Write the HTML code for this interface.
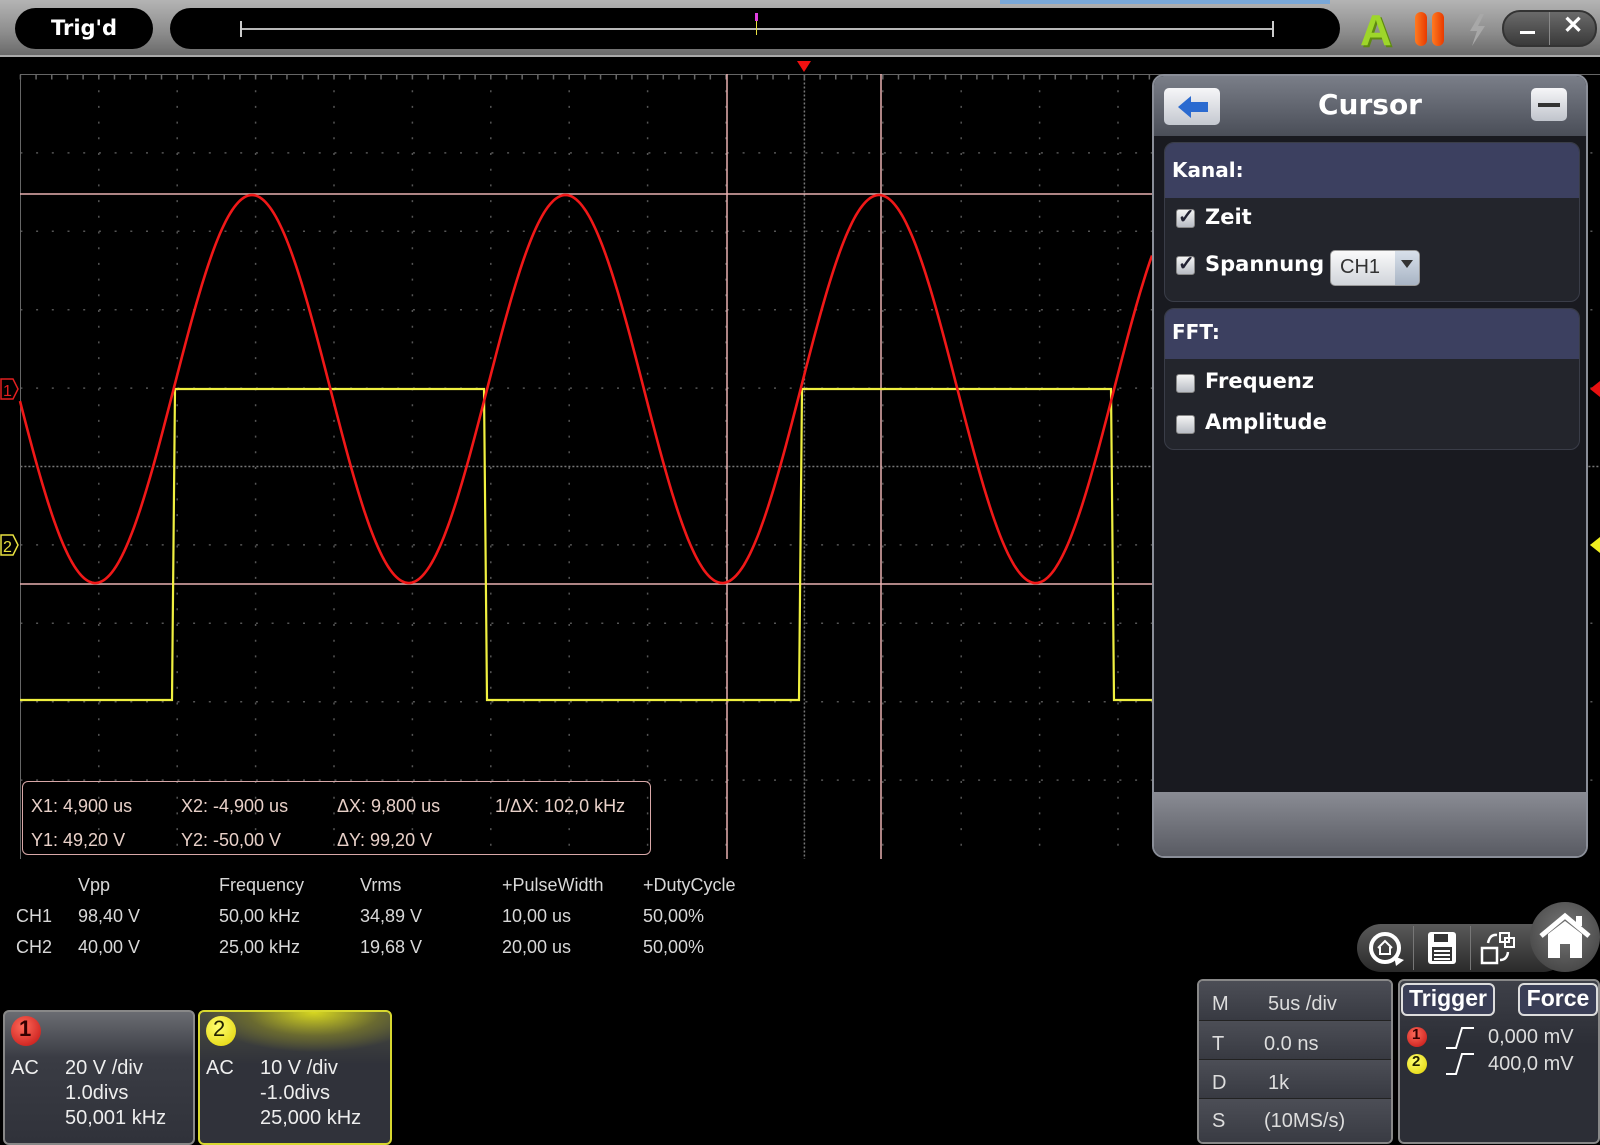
<!DOCTYPE html>
<html><head><meta charset="utf-8">
<style>
*{margin:0;padding:0;box-sizing:border-box}
body{width:1600px;height:1139px;background:#000;position:relative;overflow:hidden;font-family:"Liberation Sans",Arial,sans-serif;color:#ddd}
.abs{position:absolute}
#top{left:0;top:0;width:1600px;height:57px;background:linear-gradient(#b4b4b4,#8c8c8c 60%,#6a6a6a);border-bottom:2px solid #aaa}
.pill{position:absolute;background:#000;border-radius:22px}
.pb{font-family:"DejaVu Sans",sans-serif;font-weight:bold;color:#fff}
.meas{font-size:18px;color:#d8d8d8;position:absolute;white-space:nowrap}
.cur{font-size:18px;color:#e8d0c8;position:absolute;white-space:nowrap}
.chb{position:absolute;border-radius:6px;font-size:20px;color:#eee}
.chb div{position:absolute;white-space:nowrap}
.cb{position:absolute;width:19px;height:19px;border-radius:3px;background:linear-gradient(#f4f4f4,#b8bcc4);border:1px solid #888}
.tb{position:absolute;font-size:20px;color:#ddd;white-space:nowrap}
</style></head><body>

<div id="top" class="abs">
  <div style="position:absolute;left:1000px;top:0;width:330px;height:4px;background:#7aa8d8"></div>
  <div class="pill" style="left:15px;top:8px;width:138px;height:41px"></div>
  <div class="pb" style="position:absolute;left:15px;top:16px;width:138px;text-align:center;font-size:21px">Trig'd</div>
  <div class="pill" style="left:170px;top:8px;width:1170px;height:41px"></div>
  <div style="position:absolute;left:241px;top:28px;width:1032px;height:2px;background:#b8b8b8"></div>
  <div style="position:absolute;left:240px;top:21px;width:2px;height:16px;background:#ccc"></div>
  <div style="position:absolute;left:1272px;top:21px;width:2px;height:16px;background:#ccc"></div>
  <div style="position:absolute;left:755px;top:13px;width:3px;height:8px;background:#e040e0"></div>
  <div style="position:absolute;left:756px;top:21px;width:1px;height:14px;background:#e8e040"></div>
  <div style="position:absolute;left:1360px;top:6px;font-size:44px;font-weight:bold;color:#9ed62a;font-family:'Liberation Sans';text-shadow:2px 2px 0 #5e8a10">A</div>
  <div style="position:absolute;left:1415px;top:12px;width:12px;height:34px;border-radius:6px;background:linear-gradient(90deg,#ff7a20,#e83a00)"></div>
  <div style="position:absolute;left:1432px;top:12px;width:12px;height:34px;border-radius:6px;background:linear-gradient(90deg,#ff7a20,#e83a00)"></div>
  <svg style="position:absolute;left:1466px;top:14px" width="22" height="32"><path d="M14 0 L4 17 L11 17 L6 32 L19 12 L12 12 L18 0Z" fill="#a8a8a8"/></svg>
  <div style="position:absolute;left:1502px;top:10px;width:95px;height:37px;border-radius:18px;background:linear-gradient(#6a6a6a,#3a3a3a);border:2px solid #333"></div>
  <div style="position:absolute;left:1549px;top:12px;width:1px;height:33px;background:#888"></div>
  <div style="position:absolute;left:1520px;top:31px;width:15px;height:3px;background:#fff"></div>
  <div style="position:absolute;left:1555px;top:11px;width:36px;text-align:center;font-size:24px;color:#fff;font-weight:bold">✕</div>
</div>

<svg class="abs" style="left:0;top:0" width="1600" height="1139" id="plot">
  <g id="grid"></g>
  <!-- plot border -->
  <line x1="20.5" y1="74" x2="20.5" y2="859" stroke="#666" stroke-width="1"/>
  <line x1="20" y1="74.5" x2="1600" y2="74.5" stroke="#666" stroke-width="1"/>
  <!-- cursors -->
  <line x1="20" y1="194" x2="1152" y2="194" stroke="#e8b0b0" stroke-width="1.5"/>
  <line x1="20" y1="584" x2="1152" y2="584" stroke="#e8b0b0" stroke-width="1.5"/>
  <line x1="727" y1="74" x2="727" y2="859" stroke="#e8b0b0" stroke-width="1.5"/>
  <line x1="881" y1="74" x2="881" y2="859" stroke="#e8b0b0" stroke-width="1.5"/>
  <path id="sq" fill="none" stroke="#f0f040" stroke-width="2.2"/>
  <path id="sn" fill="none" stroke="#f01818" stroke-width="2.6"/>
  <!-- trigger marker -->
  <path d="M797 61 L811 61 L804 72Z" fill="#f01010"/>
  <!-- left markers -->
  <path d="M1 379 L13 379 L18 389 L13 399 L1 399Z" fill="#000" stroke="#e02020" stroke-width="1.5"/>
  <text x="3" y="396" font-size="16" fill="#e02020" font-family="Liberation Sans">1</text>
  <path d="M1 535 L13 535 L18 545 L13 555 L1 555Z" fill="#000" stroke="#e8e040" stroke-width="1.5"/>
  <text x="3" y="552" font-size="16" fill="#e8e040" font-family="Liberation Sans">2</text>
  <!-- right markers -->
  <path d="M1600 381 L1590 389 L1600 397Z" fill="#e81010"/>
  <path d="M1600 537 L1590 545 L1600 553Z" fill="#f0f020"/>
</svg>

<!-- cursor panel -->
<div class="abs" style="left:1152px;top:74px;width:436px;height:784px;border:2px solid #8a8e98;border-radius:12px;background:#191a20;overflow:hidden">
  <div style="position:absolute;left:0;top:0;width:100%;height:60px;background:linear-gradient(#7a7e88,#4a4e58)"></div>
  <div style="position:absolute;left:10px;top:12px;width:56px;height:37px;border-radius:5px;background:linear-gradient(#f6f6f8,#c4c8d0)"></div>
  <svg style="position:absolute;left:22px;top:18px" width="34" height="26"><path d="M2 13 L15 2 L15 8 L32 8 L32 18 L15 18 L15 24Z" fill="#2a6ad0"/></svg>
  <div class="pb" style="position:absolute;left:0;top:12px;width:100%;text-align:center;font-size:28px;color:#fff">Cursor</div>
  <div style="position:absolute;left:377px;top:12px;width:36px;height:33px;border-radius:5px;background:linear-gradient(#f6f6f8,#c0c4cc)"></div>
  <div style="position:absolute;left:384px;top:27px;width:22px;height:4px;background:#333"></div>
  <div style="position:absolute;left:0;top:782px"></div>
  <div style="position:absolute;left:0;top:716px;width:100%;height:70px;background:linear-gradient(#8a8c94,#54565e)"></div>

  <div style="position:absolute;left:10px;top:66px;width:416px;height:160px;border-radius:10px;background:#23252c;border:1px solid #3a3d48;overflow:hidden">
    <div style="height:55px;background:#3c4060"></div>
  </div>
  <div class="pb" style="position:absolute;left:18px;top:82px;font-size:20px">Kanal:</div>
  <div class="cb" style="left:22px;top:133px"></div><div style="position:absolute;left:24px;top:128px;font-size:20px;color:#223;font-weight:bold">✓</div>
  <div class="pb" style="position:absolute;left:51px;top:129px;font-size:21px">Zeit</div>
  <div class="cb" style="left:22px;top:180px"></div><div style="position:absolute;left:24px;top:175px;font-size:20px;color:#223;font-weight:bold">✓</div>
  <div class="pb" style="position:absolute;left:51px;top:176px;font-size:21px">Spannung</div>
  <div style="position:absolute;left:176px;top:174px;width:90px;height:36px;border-radius:5px;background:linear-gradient(#fafafa,#d0d4da);border:1px solid #999"></div>
  <div style="position:absolute;left:241px;top:175px;width:24px;height:34px;background:linear-gradient(#d8e0ea,#a8b4c4);border-radius:0 4px 4px 0"></div>
  <div style="position:absolute;left:186px;top:180px;font-size:20px;color:#333">CH1</div>
  <div style="position:absolute;left:247px;top:184px;width:0;height:0;border-left:6px solid transparent;border-right:6px solid transparent;border-top:8px solid #333"></div>

  <div style="position:absolute;left:10px;top:232px;width:416px;height:142px;border-radius:10px;background:#23252c;border:1px solid #3a3d48;overflow:hidden">
    <div style="height:50px;background:#3c4060"></div>
  </div>
  <div class="pb" style="position:absolute;left:18px;top:244px;font-size:20px">FFT:</div>
  <div class="cb" style="left:22px;top:298px"></div>
  <div class="pb" style="position:absolute;left:51px;top:293px;font-size:21px">Frequenz</div>
  <div class="cb" style="left:22px;top:339px"></div>
  <div class="pb" style="position:absolute;left:51px;top:334px;font-size:21px">Amplitude</div>
</div>

<!-- cursor readout box -->
<div class="abs" style="left:22px;top:781px;width:629px;height:74px;border:1.5px solid #d8a8a8;border-radius:6px"></div>
<div class="cur" style="left:31px;top:796px">X1: 4,900 us</div>
<div class="cur" style="left:181px;top:796px">X2: -4,900 us</div>
<div class="cur" style="left:337px;top:796px">ΔX: 9,800 us</div>
<div class="cur" style="left:495px;top:796px">1/ΔX: 102,0 kHz</div>
<div class="cur" style="left:31px;top:830px">Y1: 49,20 V</div>
<div class="cur" style="left:181px;top:830px">Y2: -50,00 V</div>
<div class="cur" style="left:337px;top:830px">ΔY: 99,20 V</div>

<!-- measurements -->
<div class="meas" style="left:78px;top:875px">Vpp</div>
<div class="meas" style="left:219px;top:875px">Frequency</div>
<div class="meas" style="left:360px;top:875px">Vrms</div>
<div class="meas" style="left:502px;top:875px">+PulseWidth</div>
<div class="meas" style="left:643px;top:875px">+DutyCycle</div>
<div class="meas" style="left:16px;top:906px">CH1</div>
<div class="meas" style="left:78px;top:906px">98,40 V</div>
<div class="meas" style="left:219px;top:906px">50,00 kHz</div>
<div class="meas" style="left:360px;top:906px">34,89 V</div>
<div class="meas" style="left:502px;top:906px">10,00 us</div>
<div class="meas" style="left:643px;top:906px">50,00%</div>
<div class="meas" style="left:16px;top:937px">CH2</div>
<div class="meas" style="left:78px;top:937px">40,00 V</div>
<div class="meas" style="left:219px;top:937px">25,00 kHz</div>
<div class="meas" style="left:360px;top:937px">19,68 V</div>
<div class="meas" style="left:502px;top:937px">20,00 us</div>
<div class="meas" style="left:643px;top:937px">50,00%</div>

<!-- channel boxes -->
<div class="chb" style="left:3px;top:1010px;width:192px;height:135px;background:linear-gradient(#6a6c72,#3a3c44 35%,#30323a);border:2px solid #888">
  <div style="left:6px;top:4px;width:30px;height:30px;border-radius:50%;background:radial-gradient(circle at 40% 35%,#ff6a5a,#c01010);"></div>
  <div style="left:14px;top:4px;font-size:22px;color:#300;font-weight:bold">1</div>
  <div style="left:6px;top:45px">AC</div>
  <div style="left:60px;top:45px">20 V /div</div>
  <div style="left:60px;top:70px">1.0divs</div>
  <div style="left:60px;top:95px">50,001 kHz</div>
</div>
<div class="chb" style="left:198px;top:1010px;width:194px;height:135px;background:radial-gradient(ellipse 110px 40px at 60% 0%,#d8d820,#6a6a30 60%,transparent 100%),linear-gradient(#4a4c40,#30323a 40%);border:2px solid #d8d830">
  <div style="left:6px;top:4px;width:30px;height:30px;border-radius:50%;background:radial-gradient(circle at 40% 35%,#ffff70,#e0d000);"></div>
  <div style="left:13px;top:4px;font-size:22px;color:#220;">2</div>
  <div style="left:6px;top:45px">AC</div>
  <div style="left:60px;top:45px">10 V /div</div>
  <div style="left:60px;top:70px">-1.0divs</div>
  <div style="left:60px;top:95px">25,000 kHz</div>
</div>

<!-- toolbar -->
<div class="abs" style="left:1357px;top:924px;width:210px;height:48px;border-radius:24px;background:linear-gradient(#5a5a5a,#2a2a2a)"></div>
<div class="abs" style="left:1413px;top:926px;width:1px;height:44px;background:#777"></div>
<div class="abs" style="left:1470px;top:926px;width:1px;height:44px;background:#777"></div>
<svg class="abs" style="left:1366px;top:928px" width="42" height="40"><circle cx="19" cy="20" r="14" fill="none" stroke="#fff" stroke-width="4"/><path d="M12 20 L19 13 L26 20 M14 19 L14 26 L24 26 L24 19" fill="none" stroke="#fff" stroke-width="2"/><path d="M28 28 L38 32 L30 38Z" fill="#fff"/></svg>
<svg class="abs" style="left:1426px;top:930px" width="32" height="36"><rect x="2" y="2" width="28" height="32" rx="3" fill="#fff"/><rect x="8" y="4" width="14" height="8" fill="#333"/><rect x="6" y="17" width="20" height="14" fill="#333"/><path d="M8 21 H24 M8 25 H24 M8 29 H24" stroke="#fff" stroke-width="2"/></svg>
<svg class="abs" style="left:1480px;top:928px" width="36" height="40"><rect x="2" y="20" width="15" height="15" fill="none" stroke="#fff" stroke-width="2.5"/><rect x="20" y="5" width="9" height="9" fill="none" stroke="#fff" stroke-width="2"/><rect x="25" y="10" width="9" height="9" fill="none" stroke="#fff" stroke-width="2"/><path d="M8 15 Q10 6 17 7" fill="none" stroke="#fff" stroke-width="2.5"/><path d="M28 24 Q27 32 20 32" fill="none" stroke="#fff" stroke-width="2.5"/></svg>
<div class="abs" style="left:1530px;top:902px;width:70px;height:70px;border-radius:50%;background:radial-gradient(circle at 50% 40%,#777,#3a3a3a)"></div>
<svg class="abs" style="left:1538px;top:912px" width="54" height="50"><path d="M3 24 L27 4 L51 24" fill="none" stroke="#fff" stroke-width="5"/><path d="M10 22 L27 9 L44 22 L44 46 L32 46 L32 32 L22 32 L22 46 L10 46Z" fill="#fff"/><rect x="38" y="4" width="6" height="10" fill="#fff"/></svg>

<!-- timebase box -->
<div class="abs" style="left:1197px;top:979px;width:196px;height:165px;border:2px solid #888;border-radius:6px;background:#2c2e36;overflow:hidden">
  <div style="height:40px;background:linear-gradient(#4c4e56,#383a42);border-bottom:1px solid #222"></div>
  <div style="height:39px;background:linear-gradient(#4c4e56,#383a42);border-bottom:1px solid #222"></div>
  <div style="height:39px;background:linear-gradient(#4c4e56,#383a42);border-bottom:1px solid #222"></div>
  <div style="height:45px;background:linear-gradient(#4c4e56,#383a42)"></div>
</div>
<div class="tb" style="left:1212px;top:993px">M</div><div class="tb" style="left:1268px;top:993px">5us /div</div>
<div class="tb" style="left:1212px;top:1033px">T</div><div class="tb" style="left:1264px;top:1033px">0.0 ns</div>
<div class="tb" style="left:1212px;top:1072px">D</div><div class="tb" style="left:1268px;top:1072px">1k</div>
<div class="tb" style="left:1212px;top:1110px">S</div><div class="tb" style="left:1264px;top:1110px">(10MS/s)</div>

<!-- trigger box -->
<div class="abs" style="left:1398px;top:979px;width:202px;height:165px;border:2px solid #888;border-radius:6px;background:linear-gradient(#3e4048,#2c2e36 40%)"></div>
<div class="abs" style="left:1401px;top:983px;width:94px;height:33px;border:2px solid #ddd;border-radius:6px;background:#3a3e56"></div>
<div class="abs pb" style="left:1401px;top:985px;width:94px;text-align:center;font-size:23px;font-family:'Liberation Sans';">Trigger</div>
<div class="abs" style="left:1518px;top:983px;width:80px;height:33px;border:2px solid #ddd;border-radius:6px;background:#3a3e56"></div>
<div class="abs pb" style="left:1518px;top:985px;width:80px;text-align:center;font-size:23px;font-family:'Liberation Sans';">Force</div>
<div class="abs" style="left:1407px;top:1027px;width:20px;height:20px;border-radius:50%;background:radial-gradient(circle at 40% 35%,#ff6a5a,#c01010)"></div>
<div class="abs" style="left:1412px;top:1026px;font-size:15px;color:#300;font-weight:bold">1</div>
<div class="abs" style="left:1407px;top:1054px;width:20px;height:20px;border-radius:50%;background:radial-gradient(circle at 40% 35%,#ffff70,#e0d000)"></div>
<div class="abs" style="left:1412px;top:1053px;font-size:15px;color:#220;font-weight:bold">2</div>
<svg class="abs" style="left:1444px;top:1024px" width="34" height="54"><path d="M2 24 L12 24 L18 4 L30 4" fill="none" stroke="#fff" stroke-width="2"/><path d="M2 50 L12 50 L18 30 L30 30" fill="none" stroke="#fff" stroke-width="2"/></svg>
<div class="tb" style="left:1488px;top:1026px">0,000 mV</div>
<div class="tb" style="left:1488px;top:1053px">400,0 mV</div>

<script>
(function(){
var ns="http://www.w3.org/2000/svg",g=document.getElementById('grid');
function L(x1,y1,x2,y2,c,da){var l=document.createElementNS(ns,'line');l.setAttribute('x1',x1);l.setAttribute('y1',y1);l.setAttribute('x2',x2);l.setAttribute('y2',y2);l.setAttribute('stroke',c);l.setAttribute('stroke-width','1.5');if(da)l.setAttribute('stroke-dasharray',da);g.appendChild(l);}
var dx=78.4,x0=20.4,y0=74.5;
for(var i=1;i<20;i++){var x=x0+i*dx;L(x,y0,x,859,i==10?'#777':'#555',i==10?'2 2':'2 13.7');}
for(var j=1;j<10;j++){var y=y0+j*dx;L(x0,y,1600,y,j==5?'#777':'#555',j==5?'2 2':'2 13.7');}
for(var i=0;i<100;i++){var x=x0+i*dx/5;L(x,y0,x,y0+5,'#666');}
var d="",P=313.5,cx=252,c=389,a=194;
for(var x=20;x<=1152;x+=2){var y=c-a*Math.cos(2*Math.PI*(x-cx)/P);d+=(x==20?"M":"L")+x+" "+y.toFixed(1);}
document.getElementById('sn').setAttribute('d',d);
var hi=389,lo=700;
document.getElementById('sq').setAttribute('d',"M20 700 L172 700 L175 389 L484 389 L487 700 L799 700 L802 389 L1111 389 L1114 700 L1152 700");
})();
</script>
</body></html>
